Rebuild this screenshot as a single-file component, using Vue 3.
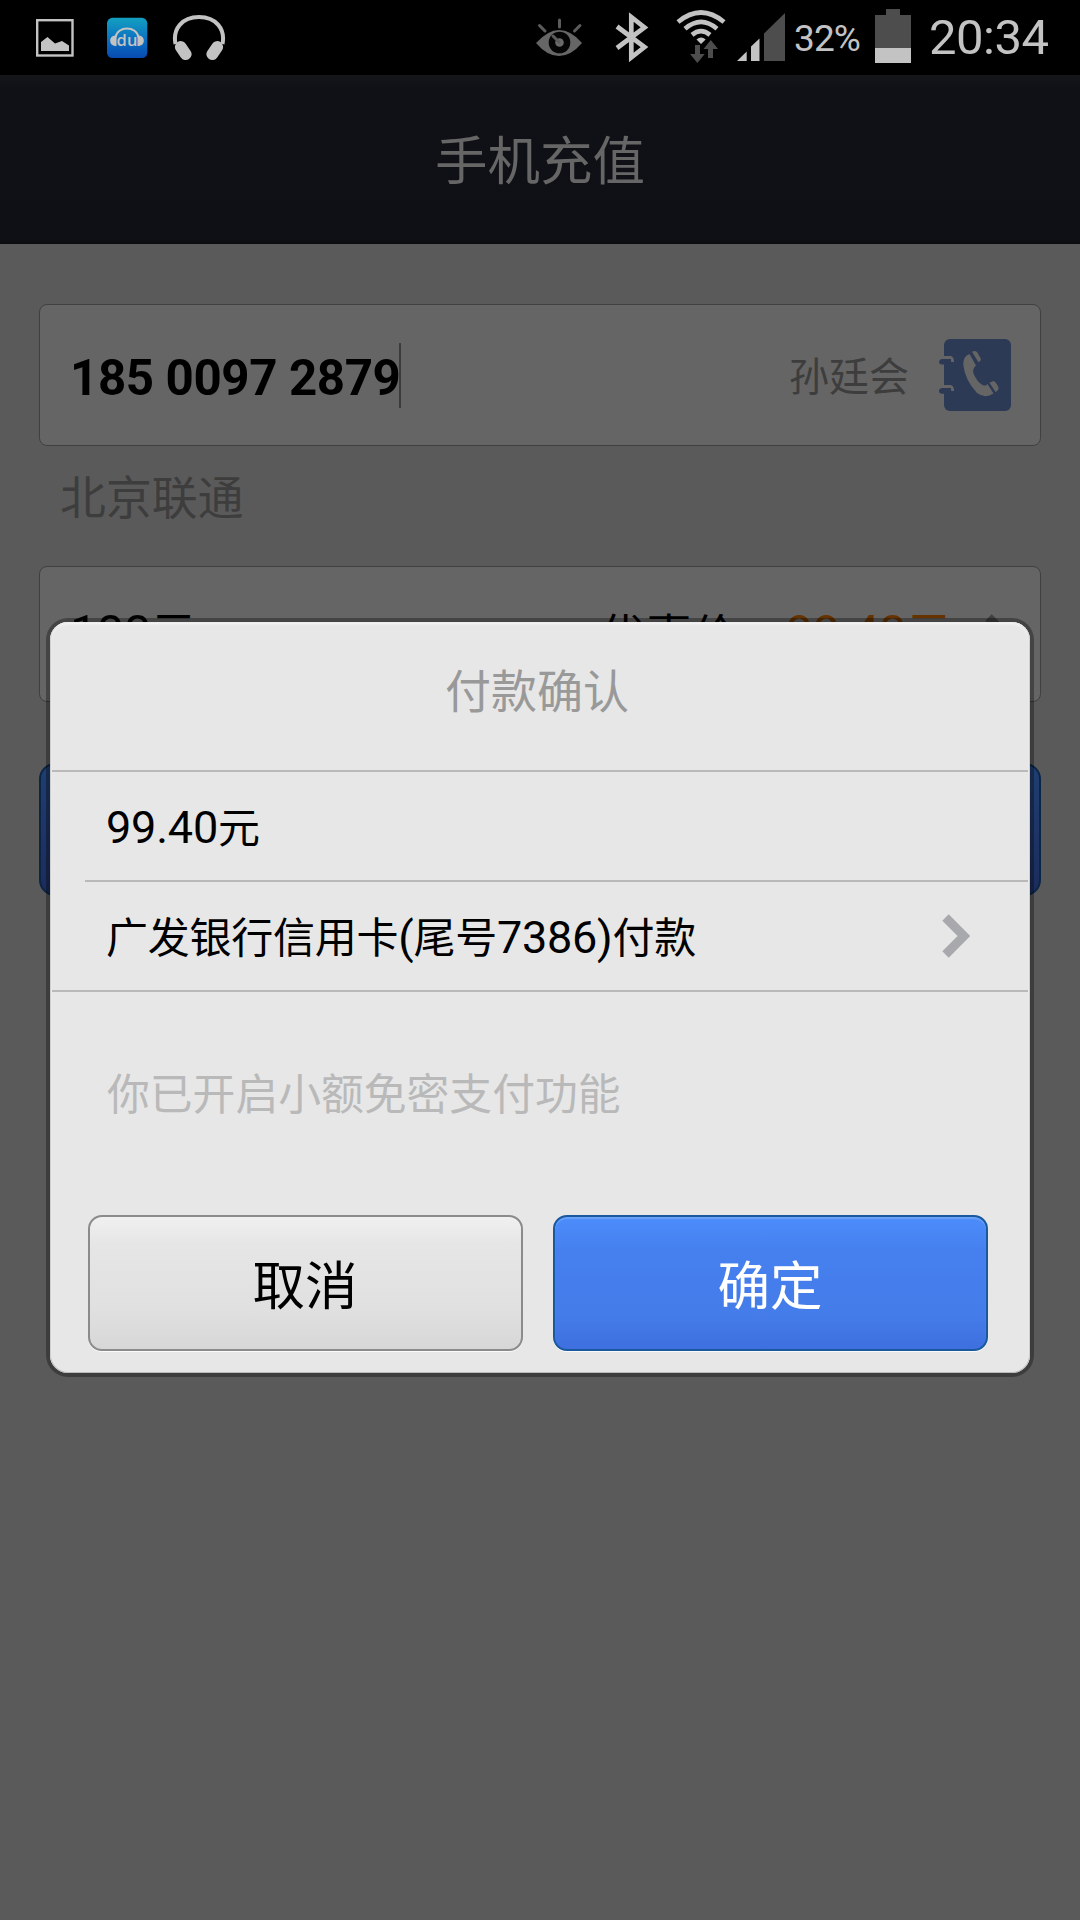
<script setup>
const title = '手机充值'
const phone = '185 0097 2879'
const contact = '孙廷会'
const carrier = '北京联通'
</script>

<template>
  <div class="screen">
    <header class="status">
      <svg class="i-pic" width="38" height="38" viewBox="36 19 38 38">
        <rect x="37.2" y="20.2" width="35.3" height="35.3" fill="none" stroke="#c3c3c3" stroke-width="2.4" />
        <path d="M41 51V42L47.5 37L55 43.5L62 41L69 45.5V51Z" fill="#c3c3c3" />
      </svg>
      <svg class="i-du" width="42" height="42" viewBox="106 17 42 42">
        <defs>
          <linearGradient id="du" x1="0" y1="0" x2="0" y2="1">
            <stop offset="0" stop-color="#13a0c0" />
            <stop offset="0.5" stop-color="#0b74c2" />
            <stop offset="1" stop-color="#084bb2" />
          </linearGradient>
        </defs>
        <rect x="107" y="17.8" width="40.3" height="40.2" rx="5.5" fill="url(#du)" />
        <path d="M115.500 37.500C117 25.500 137 25.500 138.500 37.500" fill="none" stroke="#c3c3c3" stroke-width="2" />
        <path d="M116.500 35.300V46C112 46 110.200 43.500 110.200 40.500S112.500 35.500 116.500 35.300ZM137.500 35.300V46C142 46 143.800 43.500 143.800 40.500S141.500 35.500 137.500 35.300Z" fill="#c3c3c3" />
        <text x="127" y="45.600" text-anchor="middle" class="du-text">du</text>
      </svg>
      <svg class="i-head" width="54" height="48" viewBox="172 14 54 48">
        <path d="M175.500 44C172.500 29 182 17 199 17S225.500 29 222.500 44" fill="none" stroke="#c3c3c3" stroke-width="4" />
        <path d="M180.800 47L185.700 54.200M217.200 47L212.300 54.200" stroke="#c3c3c3" stroke-width="11.800" stroke-linecap="round" />
      </svg>
      <span class="spacer"></span>
      <svg class="i-eye" width="48" height="40" viewBox="535 18 48 40">
        <path d="M536 43Q548 30 559 30Q571 30 582 43Q571 56 559 56Q547 56 536 43Z" fill="#666" />
        <circle cx="559.500" cy="42.500" r="10.800" fill="#050505" />
        <circle cx="559.500" cy="42.500" r="4.300" fill="#6a6a6a" />
        <path d="M559 42L553 36M559.500 20V27M539.500 25.500L545 31M580 25.500L574.500 31" stroke="#5c5c5c" stroke-width="3" stroke-linecap="round" />
      </svg>
      <svg class="i-bt" width="34" height="52" viewBox="615 11 34 52">
        <path d="M617 26.500L644.500 47L631.300 57.500V17L644.500 27.500L617 48" fill="none" stroke="#c3c3c3" stroke-width="4.700" />
      </svg>
      <svg class="i-wifi" width="50" height="54" viewBox="676 9 50 54">
        <path d="M678 22Q701 3 724 22M685 28.700Q701 15 717 28.700M692 34.800Q701 27.500 710 34.800" fill="none" stroke="#c3c3c3" stroke-width="4.700" />
        <path d="M696.500 39.500Q701 35.500 705.700 39.500L701 44Z" fill="#c3c3c3" />
        <path d="M695 45H700V54H704.700L697.400 63L690 54H695ZM708 58H713V49H718L710.800 40L703.500 49H708Z" fill="#4d4d4d" />
      </svg>
      <svg class="i-sig" width="49" height="49" viewBox="737 13 49 49">
        <path d="M737 61L746.700 51.500V61ZM751 61V46.500L759.500 38.500V61Z" fill="#c3c3c3" />
        <path d="M764 61V33.500L785 13V61Z" fill="#4d4d4d" />
      </svg>
      <span class="pct">32%</span>
      <svg class="i-bat" width="36" height="54" viewBox="875 9 36 54">
        <path d="M875 15H886V9H900V15H911V48H875Z" fill="#4d4d4d" />
        <path d="M875 48H911V63H875Z" fill="#c3c3c3" />
      </svg>
      <span class="time">20:34</span>
    </header>

    <div class="titlebar">{{ title }}</div>

    <main class="body">
      <div class="field phone">
        <span class="number">{{ phone }}</span>
        <i class="caret"></i>
        <span class="contact">{{ contact }}</span>
        <svg class="book" width="72" height="72" viewBox="939 339 72 72">
          <rect x="944" y="339" width="67" height="72" rx="6" fill="#2c3a55" />
          <path d="M943 356H951Q954 357 954 362H951V359H943ZM943 385H951Q954 386 954 391H951V388H943Z" fill="#656565" />
          <path d="M942 359H950Q951.500 359 951 362Q950 364.500 947 364.500H942Q939 364.500 939 361.500Q939.500 359 942 359ZM942 388H950Q951.500 388 951 391Q950 393.800 947 393.800H942Q939 393.800 939 390.800Q939.500 388 942 388Z" fill="#2c3a55" />
          <path d="M969.500 354L976 365.500Q972 369 973.500 373.500Q977 382 982.500 385Q986 386.500 987.500 384L993.500 393.500Q985 399 977 393Q965 380 963.300 365Q963 356 969.500 354Z" fill="#656565" />
          <path d="M972 351.800Q975 350 977 352L981 359Q981 361 978.500 362.300ZM989.500 382.800L993.500 381Q995.500 381 998.500 387.500Q999 390 995.500 392Z" fill="#656565" />
        </svg>
      </div>
      <div class="carrier">{{ carrier }}</div>
      <div class="field amount">
        <span class="val">100<b>元</b></span>
        <span class="spacer"></span>
        <b class="label">优惠价</b>
        <span class="val price">99.40<b>元</b></span>
        <svg class="chev" width="28" height="44" viewBox="0 0 28 44">
          <path d="M3.500 3.500L22 22L3.500 40.500" fill="none" stroke="#404040" stroke-width="9" />
        </svg>
      </div>
      <div class="submit"></div>
    </main>

    <section class="dialog">
      <h2>付款确认</h2>
      <div class="row first">99.40<b>元</b></div>
      <div class="row card">
        <span><b>广发银行信用卡</b>(<b>尾号</b>7386)<b>付款</b></span>
        <svg width="28" height="44" viewBox="0 0 28 44">
          <path d="M3.500 3.500L22 22L3.500 40.500" fill="none" stroke="#a8a9ac" stroke-width="9" />
        </svg>
      </div>
      <p class="hint">你已开启小额免密支付功能</p>
      <div class="actions">
        <button class="cancel">取消</button>
        <button class="ok">确定</button>
      </div>
    </section>
  </div>
</template>

<style>
body { background: #5a5a5a; }
</style>

<style scoped>
.screen {
  position: relative;
  width: 1080px;
  height: 1920px;
  overflow: hidden;
  display: flex;
  flex-direction: column;
  background: #5a5a5a;
  font-family: Roboto, "Noto Sans CJK SC", sans-serif;
  color: #000;
}
.screen * { box-sizing: border-box; }
.screen svg { display: block; flex: none; }
b { font-weight: 400; }
.spacer { flex: 1; }

.status {
  height: 75px;
  flex: none;
  display: flex;
  align-items: flex-start;
  background: #000;
  color: #c3c3c3;
  padding-right: 30px;
}
.i-pic { margin: 19px 0 0 36px; }
.i-du { margin: 17px 0 0 32px; }
.i-head { margin: 14px 0 0 24px; }
.i-eye { margin-top: 18px; }
.i-bt { margin: 11px 0 0 32px; }
.i-wifi { margin: 9px 0 0 27px; }
.i-sig { margin: 13px 0 0 11px; }
.du-text { font: 600 16.5px "Open Sans", sans-serif; fill: #c3c3c3; }
.pct { width: 79px; margin-left: 8px; margin-top: 19px; font-size: 37px; line-height: 40px; letter-spacing: -0.9px; }
.i-bat { margin: 9px 0 0 2px; }
.time { width: 121px; margin-left: 18px; margin-top: 8px; font-size: 49px; line-height: 60px; letter-spacing: -0.5px; white-space: nowrap; }

.titlebar {
  height: 169px;
  flex: none;
  background: linear-gradient(#14161a 0, #101116 12px, #0f1015 165px, #0b0c10 169px);
  color: #666;
  font-size: 52.5px;
  line-height: 174px;
  text-align: center;
}

.body { padding: 60px 39px 0; display: flex; flex-direction: column; }
.field {
  border: 1px solid #404040;
  border-radius: 8px;
  background: #656565;
  display: flex;
  align-items: center;
}
.phone { height: 142px; padding: 0 29px 0 30px; }
.number { font-size: 49.3px; font-weight: 700; line-height: 60px; margin-top: 6px; white-space: pre; width: 329px; letter-spacing: -0.4px; }
.caret { width: 2px; height: 65px; background: #3b3b3b; }
.contact { margin-left: auto; margin-right: 30px; margin-top: 5px; font-size: 40px; line-height: 60px; color: #3d3d3d; }
.carrier { height: 120px; padding-left: 21px; font-size: 45.9px; line-height: 104px; color: #3d3d3d; }
.amount { height: 136px; padding: 0 27px 0 30px; font-size: 49px; line-height: 60px; }
.amount b { font-size: 46px; line-height: 1; }
.val { margin-top: -3px; letter-spacing: -0.7px; }
.val b { vertical-align: -1px; }
.amount .label { margin-right: 48px; margin-top: 4px; }
.price { color: #663300; margin-right: 34px; }
.chev { margin-top: 4px; }
.submit {
  height: 133px;
  margin-top: 61px;
  border: 2px solid #0b2546;
  border-radius: 16px;
  background: linear-gradient(#1f3e70, #1e3566 50%, #1b2c5b);
}

.dialog {
  position: absolute;
  left: 50px;
  top: 622px;
  width: 980px;
  height: 751px;
  border-radius: 18px;
  background: #e7e7e7;
  box-shadow: 0 0 0 4px rgba(0, 0, 0, 0.32), inset 0 2px 3px #f7f7f7, inset 0 0 0 1px #b8b8b8;
  padding: 0 2px;
  display: flex;
  flex-direction: column;
}
h2 {
  margin: 0;
  height: 150px;
  padding-right: 6px;
  border-bottom: 2px solid #b9b9b9;
  color: #999;
  font-size: 46px;
  font-weight: 400;
  line-height: 141px;
  text-align: center;
}
.row {
  height: 110px;
  border-bottom: 2px solid #b9b9b9;
  font-size: 45px;
  line-height: 111px;
}
.row b { font-size: 42px; }
.first { margin-left: 33px; padding-left: 21px; letter-spacing: -0.2px; }
.card { padding: 0 58px 0 54px; display: flex; align-items: center; justify-content: space-between; letter-spacing: -0.25px; }
.card span { margin-top: 4px; }
.hint { margin: 0; height: 223px; padding-left: 55px; font-size: 42.8px; line-height: 206px; color: #b9b9b9; }
.actions { display: flex; justify-content: space-between; padding: 0 40px 0 36px; }
button {
  width: 435px;
  height: 136px;
  border-radius: 14px;
  font: 400 52.5px/60px Roboto, "Noto Sans CJK SC", sans-serif;
  padding: 8px 1px 0 0;
}
.cancel {
  border: 2px solid #8b8b8b;
  background: linear-gradient(#f0f0f0, #e6e6e6 20%, #e0e0e0 70%, #d7d7d7);
  box-shadow: 0 1px 0 #fafafa;
  color: #000;
}
.ok {
  border: 2px solid #195a9e;
  background: linear-gradient(#4c8dfb, #4680ef 25%, #447ce9 75%, #3f6fdf);
  box-shadow: 0 1px 0 #fafafa, inset 0 2px 1px #6aa0f8;
  color: #fff;
}
</style>
